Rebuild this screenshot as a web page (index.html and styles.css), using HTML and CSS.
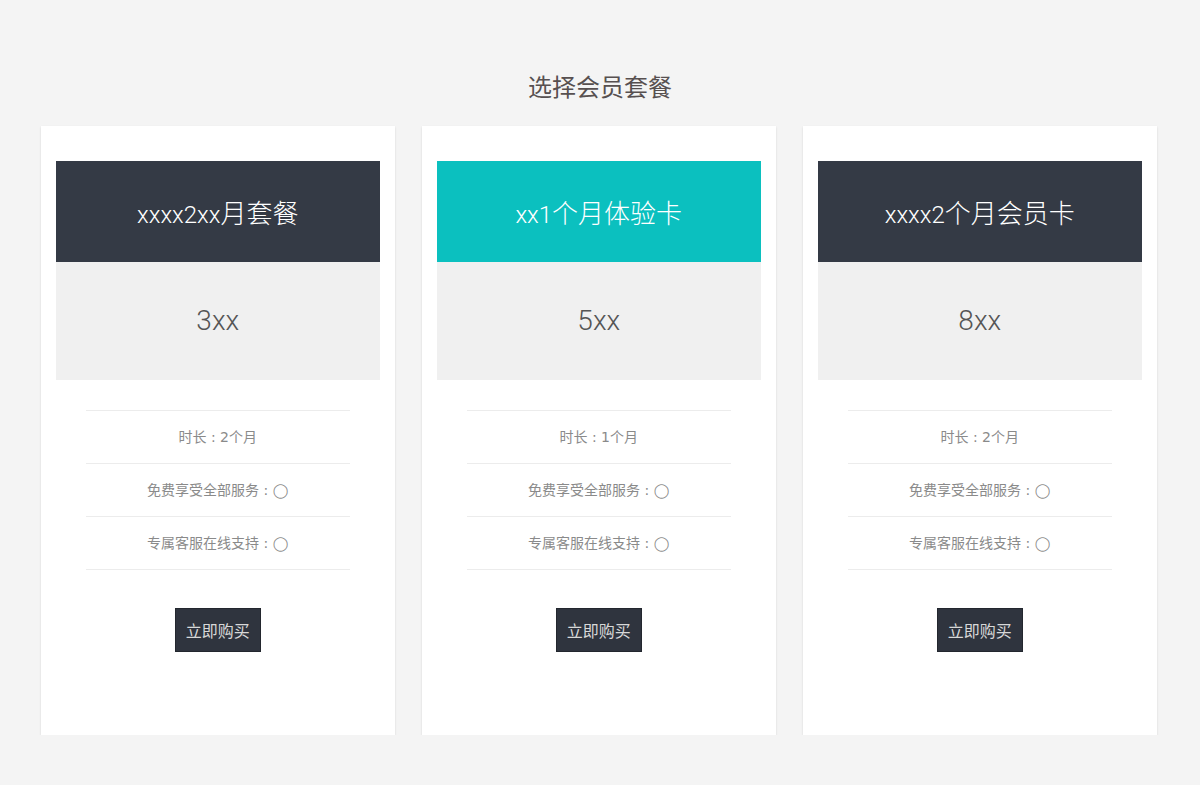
FILE: index.html
```html
<!DOCTYPE html>
<html lang="zh-CN">
<head>
<meta charset="utf-8">
<title>套餐</title>
<link rel="stylesheet" href="styles.css">
</head>
<body>
<div class="page">
  <h1 class="title">选择会员套餐</h1>
  <div class="cards">
    <div class="card">
      <div class="card-head">xxxx2xx<span class="cjk">月套餐</span></div>
      <div class="card-price">3xx</div>
      <ul class="features">
        <li>时长 : 2个月</li>
        <li>免费享受全部服务 : <span class="mark">◯</span></li>
        <li>专属客服在线支持 : <span class="mark">◯</span></li>
      </ul>
      <div class="card-foot"><button class="buy">立即购买</button></div>
    </div>
    <div class="card">
      <div class="card-head head-teal">xx1<span class="cjk">个月体验卡</span></div>
      <div class="card-price">5xx</div>
      <ul class="features">
        <li>时长 : 1个月</li>
        <li>免费享受全部服务 : <span class="mark">◯</span></li>
        <li>专属客服在线支持 : <span class="mark">◯</span></li>
      </ul>
      <div class="card-foot"><button class="buy">立即购买</button></div>
    </div>
    <div class="card">
      <div class="card-head">xxxx2<span class="cjk">个月会员卡</span></div>
      <div class="card-price">8xx</div>
      <ul class="features">
        <li>时长 : 2个月</li>
        <li>免费享受全部服务 : <span class="mark">◯</span></li>
        <li>专属客服在线支持 : <span class="mark">◯</span></li>
      </ul>
      <div class="card-foot"><button class="buy">立即购买</button></div>
    </div>
  </div>
</div>
</body>
</html>
```

FILE: styles.css
```css
html, body {
  margin: 0;
  padding: 0;
}
body {
  background: #f4f4f4;
  font-family: "DejaVu Sans", "Noto Sans CJK SC", sans-serif;
}
.page {
  padding-top: 60px;
}
.title {
  margin: 0 0 10px;
  height: 56px;
  line-height: 56px;
  text-align: center;
  font-size: 24px;
  font-weight: normal;
  color: #575050;
  font-family: "DejaVu Sans", "Noto Sans CJK SC", sans-serif;
}
.cards {
  display: flex;
  padding-left: 41px;
  gap: 27.5px;
}
.card {
  width: 353.5px;
  flex: none;
  box-sizing: border-box;
  background: #fff;
  padding: 35px 15px 83px;
  box-shadow: 0 1px 2px rgba(0, 0, 0, 0.12);
}
.card-head {
  height: 101px;
  line-height: 101px;
  background: #343a45;
  color: #fff;
  text-align: center;
  font-family: Roboto, "Noto Sans CJK SC", sans-serif;
  font-weight: 300;
  font-size: 24px;
}
.card-head .cjk {
  font-size: 26px;
  font-family: "Noto Sans CJK SC", sans-serif;
  font-weight: 300;
}
.head-teal {
  background: #0bc0bf;
}
.card-price {
  height: 118px;
  line-height: 118px;
  background: #f0f0f0;
  color: #555;
  text-align: center;
  font-family: Roboto, sans-serif;
  font-weight: 300;
  font-size: 28px;
}
.features {
  list-style: none;
  margin: 30px 30px 0;
  padding: 0;
  border-bottom: 1px solid #ececec;
}
.features li {
  border-top: 1px solid #ececec;
  height: 52px;
  line-height: 52px;
  text-align: center;
  font-size: 14px;
  color: #8a8a8a;
}
.mark {
  font-family: "DejaVu Sans", sans-serif;
  font-size: 14px;
}
.card-foot {
  margin-top: 38px;
  text-align: center;
}
.buy {
  height: 44px;
  padding: 0 10px;
  background: #2f343e;
  border: 1px solid #23272e;
  color: #d8d8d8;
  font-size: 16px;
  font-family: "Noto Sans CJK SC", sans-serif;
  cursor: pointer;
}
```
